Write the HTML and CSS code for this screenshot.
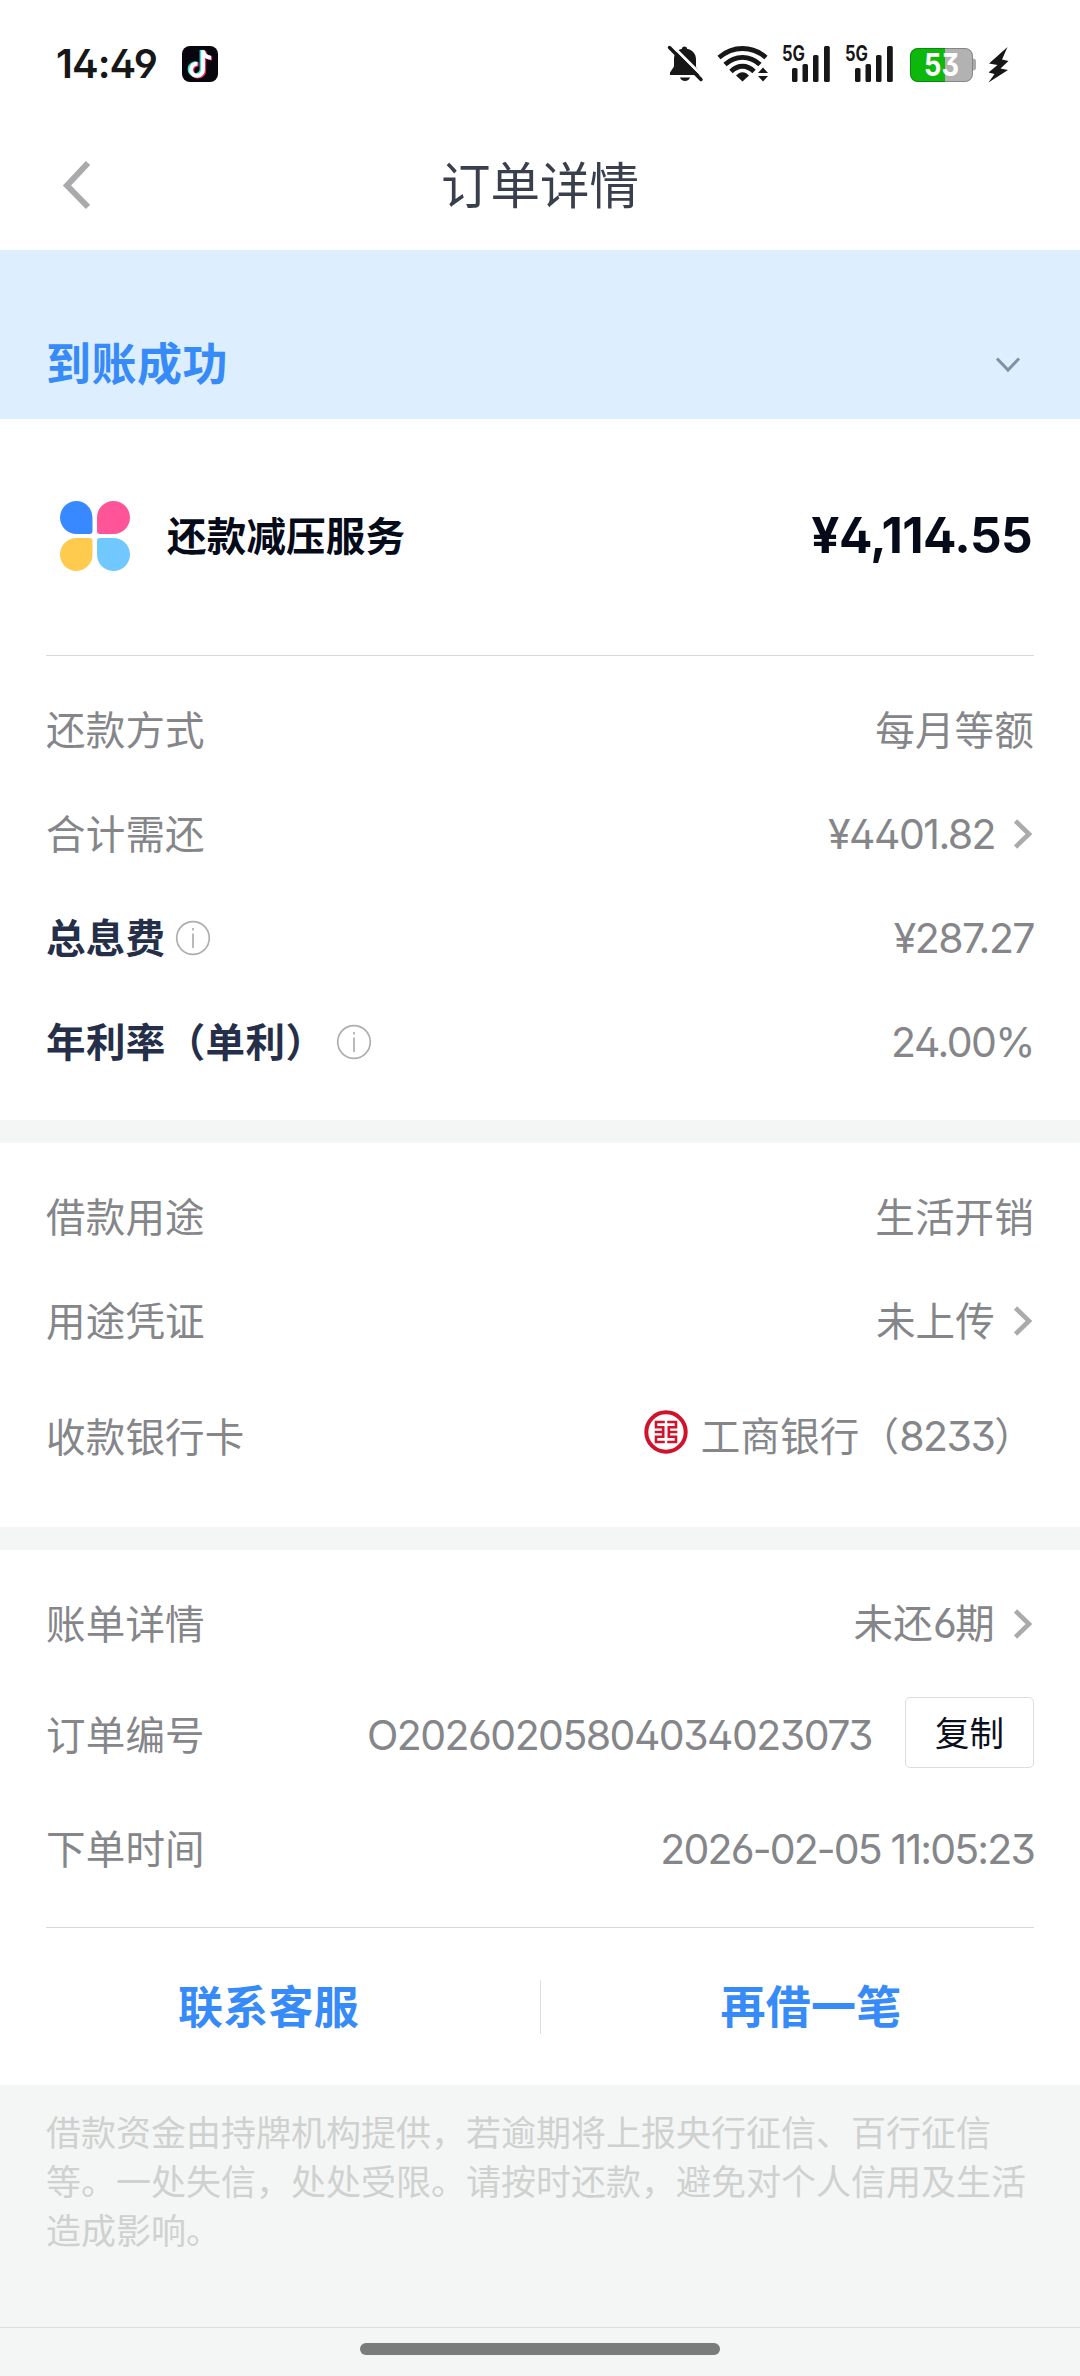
FILE: index.html
```html
<!DOCTYPE html>
<html lang="zh-CN">
<head>
<meta charset="utf-8">
<title>订单详情</title>
<link rel="stylesheet" href="styles.css">
</head>
<body>
<div class="screen">
  <header class="status">
    <div class="status-left">
      <span class="clock">14:49</span>
      <svg class="app" width="36" height="36" viewBox="0 0 36 36">
        <rect width="36" height="36" rx="8" fill="#07060f"/>
        <g fill="none" stroke-width="4">
          <path d="M15.500 17.800a6 6 0 1 0 5.500 6V4.500c.6 4.500 3.500 7 8 7.200" stroke="#2ee6dc" transform="translate(-1.400 -.6)"/>
          <path d="M15.500 17.800a6 6 0 1 0 5.500 6V4.500c.6 4.500 3.500 7 8 7.200" stroke="#f5275a" transform="translate(1.200 .8)"/>
          <path d="M15.500 17.800a6 6 0 1 0 5.500 6V4.500c.6 4.500 3.500 7 8 7.200" stroke="#fff"/>
        </g>
      </svg>
    </div>
    <svg class="indicators" width="342" height="60" viewBox="666 34 342 60" fill="#171717">
      <path d="M669 75v-2.500l4-6V59c0-6 4-9.500 8-10.300 0-3 5-3 5 0 5 1 9 5 9 10.300v8l4 5.500V75z"/>
      <path d="M679 77.500h10c-1 4.500-9 4.500-10 0z"/>
      <path d="M671 45.500l34 34" stroke="#fff" stroke-width="3"/>
      <path d="M668.500 47.500l31.500 32" stroke="#171717" stroke-width="3.400" stroke-linecap="round"/>
      <g fill="none" stroke="#171717" stroke-width="4.800">
        <path d="M718 57.500c14-12 33-12 47 0"/>
        <path d="M724 64.500c10.500-9.500 24.500-9.500 35 0"/>
        <path d="M730 71.500c7-7 16-7 23 0"/>
      </g>
      <path d="M735 75.500c4-4.500 9-4.500 13 0l-6.500 6z"/>
      <path d="M757 73l5-5.500 5 5.500zM757 76h10l-5 5.500z"/>
      <g id="signal">
        <text class="net" x="781" y="61" textLength="23" lengthAdjust="spacingAndGlyphs">5G</text>
        <rect x="791" y="68" width="5.500" height="14" rx="1.600"/>
        <rect x="801.500" y="64" width="5.500" height="18" rx="1.600"/>
        <rect x="812" y="55" width="5.500" height="27" rx="1.600"/>
        <rect x="823" y="46" width="5.800" height="36" rx="1.600"/>
      </g>
      <use href="#signal" x="63"/>
      <path d="M972 58.500c2 0 3 1 3 2.500v7c0 1.500-1 2.500-3 2.500z" fill="#aaa"/>
      <rect x="909" y="48" width="63" height="34" rx="8" fill="#b2b2b2"/>
      <path d="M917 48h27v34h-27a8 8 0 0 1-8-8V56a8 8 0 0 1 8-8z" fill="#0db80d"/>
      <rect x="909.500" y="48.500" width="62" height="33" rx="7.500" fill="none" stroke="#000" stroke-opacity=".25"/>
      <text class="charge" x="923" y="76" textLength="35" lengthAdjust="spacingAndGlyphs">53</text>
      <path d="M1006.500 47L988 63.500l8.500 1.500-9 7.500 6 1.500-6 8.500L1007 70l-7.500-1.500 8-7.500-6.500-1.500z"/>
    </svg>
  </header>

  <nav class="titlebar">
    <svg width="28" height="50" viewBox="0 0 28 50"><path d="M26 3L5 25.500l21 21.500" fill="none" stroke="#aaaaac" stroke-width="6"/></svg>
    <h1>订单详情</h1>
  </nav>

  <section class="banner">
    <strong>到账成功</strong>
    <svg width="26" height="18" viewBox="0 0 26 18"><path d="M2 3.500l11 11.500L24 3.500" fill="none" stroke="#84909c" stroke-width="3"/></svg>
  </section>

  <section class="product">
    <svg width="70" height="70" viewBox="0 0 70 70">
      <path d="M16.500 0A16.200 16.500 0 0 1 32.500 16.500V30q0 3-3 3h-13a16.500 16.500 0 0 1 0-33z" fill="#3889ff"/>
      <path d="M53.500 0A16.200 16.500 0 0 0 37 16.500V30q0 3 3 3h13.500a16.500 16.500 0 0 0 0-33z" fill="#ff5598"/>
      <path d="M16.500 70A16.200 16.500 0 0 0 32.500 53.500V40q0-3-3-3h-13a16.500 16.500 0 0 0 0 33z" fill="#ffcb4f"/>
      <path d="M53.500 70A16.200 16.500 0 0 1 37 53.500V40q0-3 3-3h13.500a16.500 16.500 0 0 1 0 33z" fill="#70c8ff"/>
    </svg>
    <h2>还款减压服务</h2>
    <span class="amount">¥4,114.55</span>
  </section>

  <section class="group first">
    <div class="row"><span class="cjk">还款方式</span><span class="value"><span class="cjk">每月等额</span></span></div>
    <div class="row"><span class="cjk">合计需还</span><span class="value"><span class="num">¥4401.82</span><svg class="arrow" width="20" height="30" viewBox="0 0 20 30"><path d="M2.500 2L16 15 2.500 28"/></svg></span></div>
    <div class="row"><span class="cjk strong">总息费</span><svg class="info" width="36" height="36" viewBox="0 0 36 36"><circle cx="18" cy="18" r="16.300"/><path d="M18 13.500v14.500M18 8v2.500"/></svg><span class="value num">¥287.27</span></div>
    <div class="row"><span class="cjk strong rate">年利率（单利）</span><svg class="info" width="36" height="36" viewBox="0 0 36 36"><circle cx="18" cy="18" r="16.300"/><path d="M18 13.500v14.500M18 8v2.500"/></svg><span class="value num">24.00%</span></div>
  </section>

  <section class="group second">
    <div class="row"><span class="cjk">借款用途</span><span class="value"><span class="cjk">生活开销</span></span></div>
    <div class="row"><span class="cjk">用途凭证</span><span class="value"><span class="cjk">未上传</span><svg class="arrow" width="20" height="30" viewBox="0 0 20 30"><path d="M2.500 2L16 15 2.500 28"/></svg></span></div>
    <div class="row bank-row"><span class="cjk">收款银行卡</span><span class="value">
      <svg class="bank" width="44" height="44" viewBox="0 0 44 44" fill="none" stroke="#d0122a">
        <circle cx="22" cy="22" r="19.700" stroke-width="4"/>
        <path d="M20.800 12H12v5.300h7.200v9.400H12V32h8.800M10.700 22h8.500M23.200 12H32v5.300h-7.200v9.400H32V32h-8.800M33.300 22h-8.500" stroke-width="2.600"/>
      </svg><span class="cjk">工商银行（<span class="num">8233</span>）</span></span></div>
  </section>

  <section class="group third">
    <div class="row"><span class="cjk">账单详情</span><span class="value"><span class="cjk">未还<span class="num">6</span>期</span><svg class="arrow" width="20" height="30" viewBox="0 0 20 30"><path d="M2.500 2L16 15 2.500 28"/></svg></span></div>
    <div class="row order-row"><span class="cjk">订单编号</span><span class="value"><span class="num">O20260205804034023073</span><button class="copy">复制</button></span></div>
    <div class="row time-row"><span class="cjk">下单时间</span><span class="value num time">2026-02-05 11:05:23</span></div>
  </section>

  <section class="actions">
    <a>联系客服</a>
    <a>再借一笔</a>
  </section>

  <footer class="notice">
    <p>借款资金由持牌机构提供，若逾期将上报央行征信、百行征信等。一处失信，处处受限。请按时还款，避免对个人信用及生活造成影响。</p>
  </footer>
  <div class="homebar"><i></i></div>
</div>
</body>
</html>
```

FILE: styles.css
```css
* { box-sizing: border-box; }
body {
  margin: 0;
  background: #fff;
  font-family: "Noto Sans CJK SC", sans-serif;
  color: #858689;
}
h1, h2, p { margin: 0; }
svg { display: block; flex: none; }

.screen {
  width: 1080px;
  height: 2376px;
  display: flex;
  flex-direction: column;
  overflow: hidden;
}
.screen > * { flex: none; }

.num, .clock, .amount, .net, .charge {
  font-family: Inter, "Noto Sans CJK SC", sans-serif;
  font-feature-settings: "cv02", "cv03", "cv04", "cv09";
}

.status {
  height: 120px;
  padding: 34px 71px 0 56px;
  display: flex;
  justify-content: space-between;
  align-items: flex-start;
}
.status-left { display: flex; height: 40px; width: 162px; margin-top: 10px; justify-content: space-between; align-items: center; }
.indicators { overflow: visible; }
.clock { font-size: 40px; font-weight: 600; color: #171717; letter-spacing: -.9px; line-height: 40px; }
.net { font-size: 21px; font-weight: 700; }
.charge { font-size: 31px; font-weight: 700; fill: #fff; }

.titlebar {
  height: 130px;
  padding: 0 62px;
  display: grid;
  grid-template-columns: 28px 1fr 28px;
  align-items: center;
}
.titlebar h1 {
  margin-top: -5px;
  font-size: 49.500px;
  font-weight: 400;
  line-height: 60px;
  text-align: center;
  color: #3a3f4e;
}

.banner {
  height: 169px;
  padding: 58px 59px 0 46px;
  display: flex;
  justify-content: space-between;
  align-items: center;
  background: #ddeeff;
}
.banner strong { margin-top: -4px; font-size: 45px; line-height: 60px; font-weight: 700; color: #378bf8; letter-spacing: .5px; }

.product {
  height: 237px;
  margin: 0 46px;
  padding: 0 2px 2px 14px;
  display: flex;
  align-items: center;
  border-bottom: 1px solid #d8d8da;
  color: #060b19;
}
.product h2 { margin: -4px 0 0 37px; font-size: 39.500px; line-height: 50px; font-weight: 700; letter-spacing: .2px; }
.amount { margin: -2px 0 0 auto; font-size: 49.500px; font-weight: 700; letter-spacing: -.6px; line-height: 60px; }

.group { padding: 22px 46px 0; }
.first { height: 464px; }
.second { height: 407px; border-top: 23px solid #f4f6f5; }
.third { height: 400px; border-top: 23px solid #f4f6f5; }

.row {
  height: 104px;
  display: flex;
  align-items: center;
  font-size: 39.500px;
  line-height: 50px;
}
.cjk { margin-top: -4px; letter-spacing: .2px; }
.bank-row { height: 128px; }
.order-row { height: 118px; }
.time-row { height: 110px; }
.value { margin-left: auto; display: flex; align-items: center; }
.value.num, .value .num { font-size: 41px; letter-spacing: -1.550px; }
.value.time { letter-spacing: -1.850px; }
.strong { font-weight: 700; color: #252f49; }
.info { margin-left: 10px; fill: none; stroke: #aeaeae; stroke-width: 1.700px; }
.rate { letter-spacing: .4px; }
.rate + .info { margin-left: 11px; }
.arrow { margin: 0 1px 0 18px; fill: none; stroke: #a9abac; stroke-width: 4.600px; }
.bank { margin: -10px 13px 0 0; }

.copy {
  width: 129px;
  height: 71px;
  margin: -6px 0 0 33px;
  padding: 0 0 3px;
  border: 1.500px solid #dcdcde;
  border-radius: 5px;
  background: #fff;
  color: #0b1020;
  font: 400 34.500px/50px "Noto Sans CJK SC", sans-serif;
}

.actions {
  height: 158px;
  margin: 0 46px;
  border-top: 1px solid #d8d8da;
  display: grid;
  grid-template-columns: 1fr 1fr;
  align-items: center;
}
.actions a {
  height: 54px;
  padding-right: 49px;
  text-align: center;
  font-size: 45px;
  line-height: 50px;
  font-weight: 700;
  letter-spacing: .3px;
  color: #378bf8;
}
.actions a + a { padding: 0 0 0 47px; border-left: 1px solid #dedee0; }

.notice { height: 242px; padding: 21px 46px 0; background: #f4f6f5; }
.notice p { width: 990px; font-size: 35px; line-height: 49px; color: #cfd1d0; }

.homebar {
  height: 49px;
  padding-top: 15px;
  border-top: 1px solid #dcdedd;
  background: #f4f6f5;
}
.homebar i { display: block; width: 360px; height: 12px; margin: 0 auto; border-radius: 6px; background: #7a7c7b; }
```
